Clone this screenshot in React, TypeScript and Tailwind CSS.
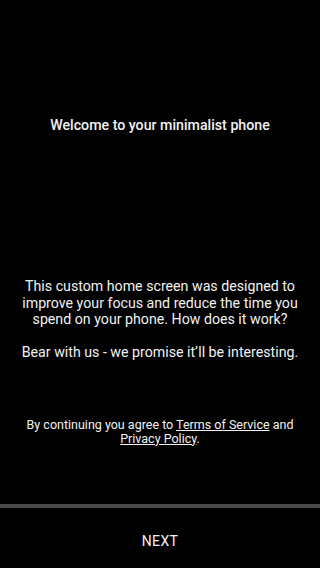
import React from 'react';

export default function App() {
  return (
    <div
      className="w-[320px] h-[568px] bg-black text-[#f2f2f2] flex flex-col"
      style={{ fontFamily: 'Roboto, "Noto Sans", sans-serif' }}
    >
      <div className="flex-1 flex flex-col items-center text-center px-3">
        <h1 className="mt-[115px] text-[14.2px] leading-[20px] font-medium">
          Welcome to your minimalist phone
        </h1>
        <div className="mt-[143px] text-[14.2px] leading-[16.5px]">
          <p>
            This custom home screen was designed to improve your focus and reduce the time you
            spend on your phone. How does it work?
          </p>
          <p className="mt-[16.5px]">Bear with us - we promise it’ll be interesting.</p>
        </div>
        <p className="mt-[57px] text-[12.5px] leading-[14px]">
          By continuing you agree to <span className="underline">Terms of Service</span> and{' '}
          <span className="underline">Privacy Policy</span>.
        </p>
      </div>
      <div className="h-[4px] bg-[#4a4a4a]" />
      <button className="h-[60px] w-full pt-[6px] text-[14px] text-[#f2f2f2] tracking-wide">
        NEXT
      </button>
    </div>
  );
}
